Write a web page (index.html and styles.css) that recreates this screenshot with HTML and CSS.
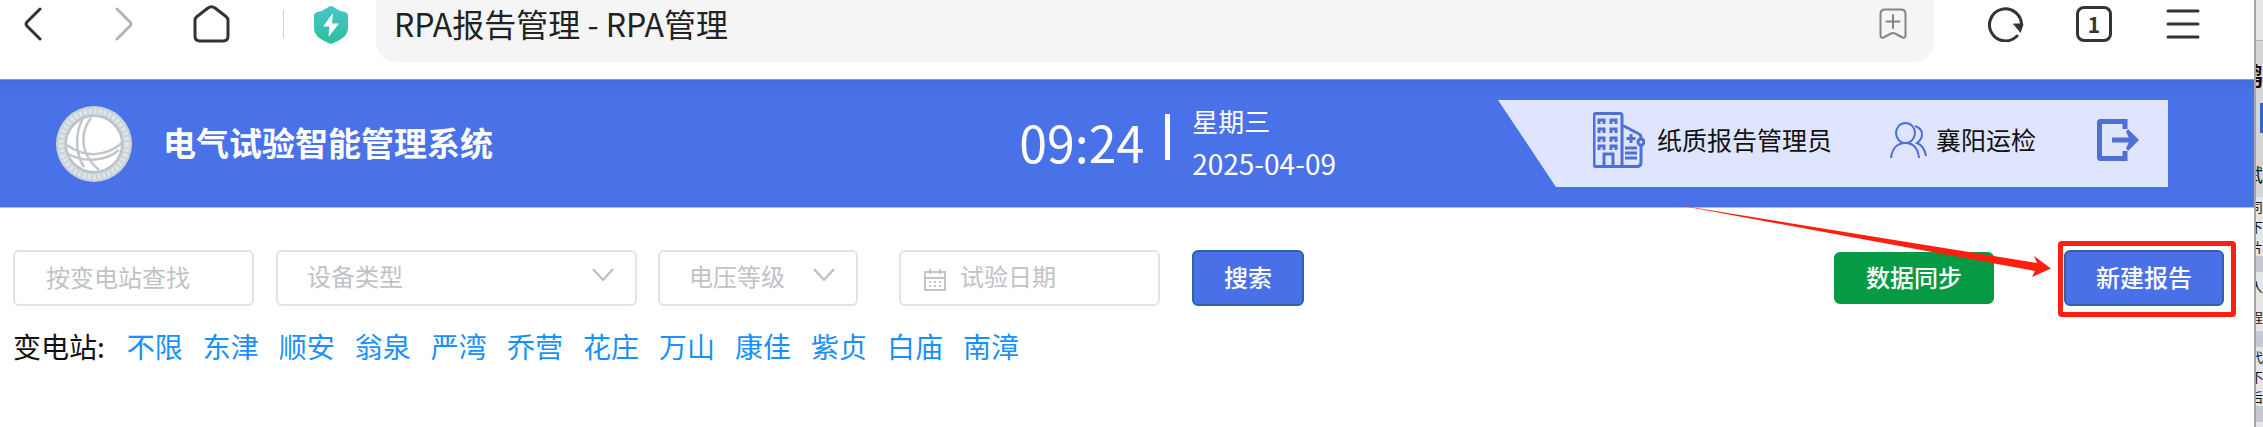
FILE: index.html
```html
<!DOCTYPE html>
<html lang="zh-CN">
<head>
<meta charset="utf-8">
<title>RPA报告管理 - RPA管理</title>
<link rel="stylesheet" href="styles.css">
</head>
<body>
<div class="window">
  <nav class="browser-bar" aria-label="浏览器">
    <button class="nav-btn back" aria-label="后退"><svg width="18" height="34" viewBox="0 0 18 34"><path d="M16 2 3 15q-2 2 0 4L16 32"/></svg></button>
    <button class="nav-btn forward" aria-label="前进"><svg width="18" height="34" viewBox="0 0 18 34"><path d="M2 2 15 15q2 2 0 4L2 32"/></svg></button>
    <button class="nav-btn home" aria-label="主页"><svg width="37" height="38" viewBox="0 0 37 38"><path d="M2 15.500Q2 13 4 11.500L15 3q3.500-2.500 7 0l11 8.500q2 1.500 2 4V31q0 5-5 5H7q-5 0-5-5z"/></svg></button>
    <span class="separator"></span>
    <svg class="shield" width="34" height="38" viewBox="0 0 34 38"><defs><linearGradient id="teal" x2="0" y2="1"><stop stop-color="#48c5cc"/><stop offset="1" stop-color="#2bc09c"/></linearGradient></defs><path fill="url(#teal)" d="M17 0q2 0 4 2 4 3 10 4 3 1 3 4v12c0 8-7 12-17 16C7 34 0 30 0 22V10q0-3 3-4 6-1 10-4 2-2 4-2z"/><path fill="#fff" d="M19 7 9 20.500h6.500L14.500 31 25 17.500h-7z"/></svg>
    <div class="address">
      <input type="text" aria-label="地址栏" value="RPA报告管理 - RPA管理">
      <button class="nav-btn bookmark" aria-label="收藏"><svg width="28" height="32" viewBox="0 0 28 32"><path d="M1.500 6q0-4.500 4.500-4.500h16q4.500 0 4.500 4.500v21.500q0 3-3 2L16 25.500q-2-1-4 0l-7.500 4q-3 1-3-2zM14 7v13M7.500 13.500h13"/></svg></button>
    </div>
    <button class="nav-btn refresh" aria-label="刷新"><svg width="36" height="36" viewBox="0 0 36 36"><path d="M29 30A16 16 0 1 1 33.500 19"/><path class="solid" d="M26 18h9l-2.500 8z"/></svg></button>
    <button class="nav-btn tabs" aria-label="标签页">1</button>
    <button class="nav-btn menu" aria-label="菜单"><svg width="34" height="30" viewBox="0 0 34 30"><path d="M2 2h30M2 15h30M2 28h30"/></svg></button>
  </nav>

  <header class="app-header">
    <svg class="logo" width="76" height="76" viewBox="0 0 76 76" aria-hidden="true">
      <circle cx="38" cy="38" r="38" fill="#cbd3d6"/>
      <circle cx="38" cy="38" r="33" fill="none" stroke="#dfe6e9" stroke-width="5" stroke-dasharray="3 2"/>
      <circle cx="38" cy="38" r="28" fill="#fff" stroke="#b9c1c5" stroke-width="2"/>
      <g fill="none" stroke="#c1c6c9" stroke-width="2.500"><path d="M27 12C18 29 20 49 28 61M35 12C22 29 26 50 43 64M11 39c18 13 38 12 55-2M12 48c17 9 38 7 51-4"/></g>
    </svg>
    <h1>电气试验智能管理系统</h1>
    <div class="clock">
      <time class="hour">09:24</time>
      <span class="clock-bar"></span>
      <div class="date"><span class="weekday">星期三</span><time>2025-04-09</time></div>
    </div>
    <div class="user-panel">
      <svg class="building" width="52" height="56" viewBox="0 0 52 56"><path d="M3 1.500h24q2 0 2 2v51H3q-2 0-2-2v-49q0-2 2-2zM29 13l17 9q2 1 2 4v24q0 4.500-4 4.500H29M11 54V42h9v12M6 12V8h5v4M18 12V8h5v4M6 21v-4h5v4M18 21v-4h5v4M6 30v-4h5v4M18 30v-4h5v4M6 38v-4h5v4M18 38v-4h5v4M38 22v9M33.500 26.500h9M32 36h12M32 41h12M32 46h12"/><circle cx="48" cy="30" r="3" fill="#dfe5fd"/></svg>
      <span>纸质报告管理员</span>
      <svg class="people" width="37" height="37" viewBox="0 0 37 37"><ellipse cx="15.500" cy="11" rx="9.500" ry="10"/><path d="M1 36C2 27 7 21 15.500 21S28 27 29 36M25 4c9 3 9 12 2 17 5 2 8 7 9 13"/></svg>
      <span>襄阳运检</span>
      <button class="logout" aria-label="退出"><svg width="42" height="42" viewBox="0 0 42 42"><path d="M28 10V2.500H3.500q-1 0-1 1v35q0 1 1 1H28V32M15 21h20"/><path class="solid" d="M31 10 42 21 31 32l-2-3 4-8-4-8z"/></svg></button>
    </div>
  </header>

  <main>
    <form class="filters">
      <input class="field station" type="text" placeholder="按变电站查找" aria-label="变电站">
      <div class="picker device">
        <select class="field" aria-label="设备类型"><option>设备类型</option></select>
        <svg width="22" height="13" viewBox="0 0 22 13"><path d="m1 1 10 11L21 1"/></svg>
      </div>
      <div class="picker voltage">
        <select class="field" aria-label="电压等级"><option>电压等级</option></select>
        <svg width="22" height="13" viewBox="0 0 22 13"><path d="m1 1 10 11L21 1"/></svg>
      </div>
      <label class="field day">
        <svg width="22" height="22" viewBox="0 0 22 22"><path d="M1 3h20v18H1zM1 9h20M6 0v5M16 0v5M5 13h2M10 13h2M15 13h2M5 17h2M10 17h2M15 17h2"/></svg>
        <input type="text" placeholder="试验日期" aria-label="试验日期">
      </label>
      <button class="btn search" type="button">搜索</button>
      <button class="btn sync" type="button">数据同步</button>
      <div class="callout">
        <button class="btn create" type="button">新建报告</button>
        <svg class="arrow" width="379" height="73" viewBox="0 0 379 73"><path d="M0 0 365 59 362 52 379 64.500 360 73 363 67z"/></svg>
      </div>
    </form>
    <div class="stations">
      <span>变电站:</span>
      <div class="station-links">
        <a href="#">不限</a><a href="#">东津</a><a href="#">顺安</a><a href="#">翁泉</a><a href="#">严湾</a><a href="#">乔营</a><a href="#">花庄</a><a href="#">万山</a><a href="#">康佳</a><a href="#">紫贞</a><a href="#">白庙</a><a href="#">南漳</a>
      </div>
    </div>
  </main>
</div>

<aside class="behind" aria-hidden="true">
  <div class="behind-top"></div>
  <div class="behind-head"><b>鹅</b><i></i><span>试</span></div>
  <div class="behind-card"><span>司</span><span>下</span><span>片</span></div>
  <div class="behind-card"><span>人</span><span>程</span></div>
  <div class="behind-card"><span>代</span><span>不</span><span>后</span></div>
  <div class="behind-card"></div>
</aside>
</body>
</html>
```

FILE: styles.css
```css
* { box-sizing: border-box; }

body {
  margin: 0;
  min-height: 100vh;
  display: flex;
  background: #fff;
  color: #111;
  font-family: "Noto Sans CJK SC", sans-serif;
}

button, input, select { font: inherit; color: inherit; margin: 0; }
button { cursor: pointer; }
svg { flex: none; fill: none; }

.window { flex: 1; min-width: 0; }

/* Browser bar */
.browser-bar {
  display: flex;
  align-items: flex-start;
  padding: 0 54px 17px 24px;
  border-bottom: 1px solid #8d92c0;
}
.nav-btn {
  display: flex;
  align-items: center;
  justify-content: center;
  height: 48px;
  padding: 0;
  border: 0;
  background: none;
}
.nav-btn svg { stroke: #333; stroke-width: 3; stroke-linecap: round; stroke-linejoin: round; }
.nav-btn .solid { fill: #333; stroke-width: 1; }
.forward { margin-left: 73px; }
.forward svg { stroke: #b5b5b5; }
.home { margin-left: 60px; }
.separator { width: 1px; height: 28px; margin: 10px 30px 0 53px; background: #d4d4d4; }
.shield { margin: 6px 28px 0 0; }
.address {
  flex: 1;
  display: flex;
  align-items: flex-start;
  height: 62px;
  padding: 0 27px 0 18px;
  border-radius: 0 0 20px 20px;
  background: #f5f5f5;
}
.address input {
  flex: 1;
  height: 46px;
  padding: 0;
  border: 0;
  background: none;
  color: #222;
  font-size: 32px;
}
.nav-btn.bookmark svg { stroke: #858585; stroke-width: 2; }
.refresh { margin-left: 54px; }
.tabs {
  width: 36px;
  height: 36px;
  margin: 6px 54px 0 52px;
  border: 3px solid #333;
  border-radius: 8px;
  color: #333;
  font-size: 21px;
  font-weight: 700;
  line-height: 24px;
}

/* Application header */
.app-header {
  display: flex;
  align-items: center;
  height: 128px;
  padding: 0 86px 0 56px;
  border-bottom: 1px solid #9cc3fb;
  background: linear-gradient(#446bdd, #4a72e8 14px);
  color: #fff;
}
h1 { margin: 0 0 0 31px; padding-bottom: 3px; font-size: 33px; font-weight: 700; line-height: 48px; }
.clock { display: flex; align-items: center; margin: 0 162px 0 auto; }
.hour { padding-bottom: 5px; font-size: 50px; line-height: 60px; }
.clock-bar { width: 5px; height: 46px; margin: 0 22px 14px 21px; background: #fff; }
.date { display: flex; flex-direction: column; padding-bottom: 3px; font-size: 28px; line-height: 42px; }
.weekday { font-size: 26px; }
.user-panel {
  display: flex;
  align-items: center;
  height: 87px;
  padding: 0 29px 7px 95px;
  clip-path: polygon(0 0, 100% 0, 100% 100%, 58px 100%);
  background: #dfe5fd;
  color: #111;
  font-size: 25px;
}
.user-panel span { padding-bottom: 2px; }
.user-panel svg { stroke: #506fd3; stroke-width: 2; }
.building { margin-right: 12px; }
.user-panel .building { stroke-width: 3; }
.people { margin: 0 9px 0 58px; }
.logout { display: flex; margin-left: 61px; padding: 0; border: 0; background: none; }
.user-panel .logout svg { stroke-width: 5; }
.user-panel .logout .solid { fill: #506fd3; stroke: none; }

/* Filters */
.filters {
  display: flex;
  align-items: center;
  padding: 42px 30px 0 13px;
  font-size: 24px;
}
.field {
  height: 56px;
  border: 2px solid #e3e3e3;
  border-radius: 6px;
  background: #fff;
  color: #bfc2c6;
}
::placeholder { color: #bfc2c6; opacity: 1; }
.station { width: 241px; padding: 0 31px 3px; }
.picker { position: relative; }
.picker .field { width: 100%; padding: 0 29px 6px; appearance: none; }
.picker svg {
  position: absolute;
  top: 18px;
  right: 23px;
  stroke: #bcbcbc;
  stroke-width: 2;
  pointer-events: none;
}
.device { width: 361px; margin-left: 22px; }
.voltage { width: 200px; margin: 0 41px 0 21px; }
.day { display: flex; align-items: center; width: 261px; padding: 0 23px; }
.day svg { margin-top: 4px; stroke: #c4c4c4; stroke-width: 2; }
.day input { min-width: 0; flex: 1; margin-left: 14px; padding: 0 0 6px; border: 0; background: none; }
.btn {
  height: 56px;
  padding: 0 30px 2px;
  border: 2px solid #2d62a8;
  border-radius: 6px;
  background: #4a70e8;
  color: #fff;
  font-weight: 500;
  line-height: 24px;
}
.search { margin-left: 32px; }
.sync { height: 52px; margin: 0 70px 0 auto; border-color: #079a45; background: #079a45; }
.callout { position: relative; display: flex; }
.callout::after {
  content: "";
  position: absolute;
  inset: -9px -12px -11px -6px;
  border: 5px solid #ff1f10;
  border-radius: 4px;
  pointer-events: none;
}
.arrow { position: absolute; top: -46px; right: calc(100% + 13px); fill: #ff1f10; pointer-events: none; }

/* Station links */
.stations { display: flex; gap: 22px; padding: 20px 13px; font-size: 28px; line-height: 40px; }
.station-links { display: flex; flex-wrap: wrap; gap: 20px; }
a { color: #1890ff; text-decoration: none; }

/* Sliver of the window behind */
.behind {
  display: flex;
  flex-direction: column;
  width: 9px;
  overflow: hidden;
  border-left: 2px solid #a5a5a5;
  background: #c6c9d2;
  font-size: 18px;
  line-height: 26px;
}
.behind > div { display: flex; flex-direction: column; align-items: flex-end; }
.behind-top { height: 41px; border-bottom: 1px solid #b4b4b4; background: #e5e5e5; }
.behind-head { height: 156px; padding-top: 16px; background: #d6d6d6; }
.behind-head b { font-size: 24px; line-height: 36px; }
.behind-head i { width: 3px; height: 30px; margin: 10px 0 28px; background: #3566c8; }
.behind-card {
  justify-content: space-around;
  height: 59px;
  margin-bottom: 16px;
  background: #e6e6e6;
  font-size: 13px;
  line-height: 19px;
}
.behind-card:last-child { flex: 1; height: auto; margin: 0; }
```
